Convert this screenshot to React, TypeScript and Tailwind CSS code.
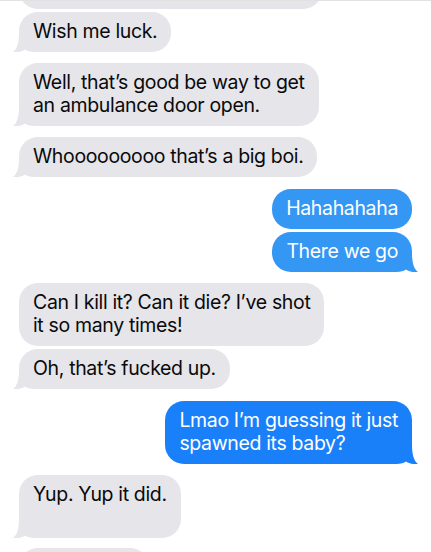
import React from "react";

type Msg = {
  lines: string[];
  me?: boolean;
  tail?: boolean;
  color?: string;
  mt: string;
};

const GRAY = "#e5e5ea";

const messages: Msg[] = [
  { lines: ["Wish me luck."], tail: true, mt: "mt-[3px]" },
  { lines: ["Well, that’s good be way to get", "an ambulance door open."], tail: true, mt: "mt-[11px]" },
  { lines: ["Whooooooooo that’s a big boi."], tail: true, mt: "mt-[11px]" },
  { lines: ["Hahahahaha"], me: true, color: "bg-[#3497f4]", mt: "mt-[12px]" },
  { lines: ["There we go"], me: true, tail: true, color: "bg-[#3497f4]", mt: "mt-[3px]" },
  { lines: ["Can I kill it? Can it die? I’ve shot", "it so many times!"], mt: "mt-[11px]" },
  { lines: ["Oh, that’s fucked up."], tail: true, mt: "mt-[3px]" },
  { lines: ["Lmao I’m guessing it just", "spawned its baby?"], me: true, tail: true, color: "bg-[#1a80fa]", mt: "mt-[12px]" },
  { lines: ["Yup. Yup it did.", "\u00a0"], tail: true, mt: "mt-[11px]" },
];

const Tail = ({ me, fill }: { me?: boolean; fill: string }) => (
  <svg
    width="30"
    height="20"
    viewBox="0 0 30 20"
    className={
      me
        ? "absolute -right-[6px] bottom-0 -scale-x-100"
        : "absolute -left-[6px] bottom-0"
    }
  >
    <path
      d="M6 1 C6 11 4 17 0 20 C5 20.5 9 19.5 12 17.5 C14 19 17 20 22 20 L28 20 L28 1 Z"
      fill={fill}
    />
  </svg>
);

const Bubble = ({ m }: { m: Msg }) => {
  const fill = m.me ? (m.color === "bg-[#1a80fa]" ? "#1a80fa" : "#3497f4") : GRAY;
  return (
    <div className={`flex ${m.me ? "justify-end" : "justify-start"} ${m.mt}`}>
      <div
        className={`relative rounded-[19px] px-[14px] pt-[8px] pb-[9px] text-[19.5px] leading-[23px] tracking-[-0.35px] whitespace-nowrap ${
          m.me ? `${m.color} text-white` : "bg-[#e5e5ea] text-[#0a0a0a]"
        }`}
      >
        {m.tail && <Tail me={m.me} fill={fill} />}
        <div className="relative">
          {m.lines.map((l, i) => (
            <div key={i}>{l}</div>
          ))}
        </div>
      </div>
    </div>
  );
};

export default function App() {
  return (
    <div
      className="h-[552px] w-[431px] overflow-hidden bg-white border-t border-[#e2e2e2]"
      style={{ fontFamily: "Inter, 'Noto Sans', sans-serif" }}
    >
      <div className="flex flex-col px-[19px]">
        {/* previous message, cut off at the top */}
        <div className="flex justify-start -mt-[32px]">
          <div className="h-[40px] w-[303px] rounded-[19px] bg-[#e5e5ea]" />
        </div>
        {messages.map((m, i) => (
          <Bubble key={i} m={m} />
        ))}
        <div className="flex justify-start mt-[10px]">
          <div className="h-[40px] w-[130px] rounded-[19px] bg-[#e5e5ea]" />
        </div>
      </div>
    </div>
  );
}
